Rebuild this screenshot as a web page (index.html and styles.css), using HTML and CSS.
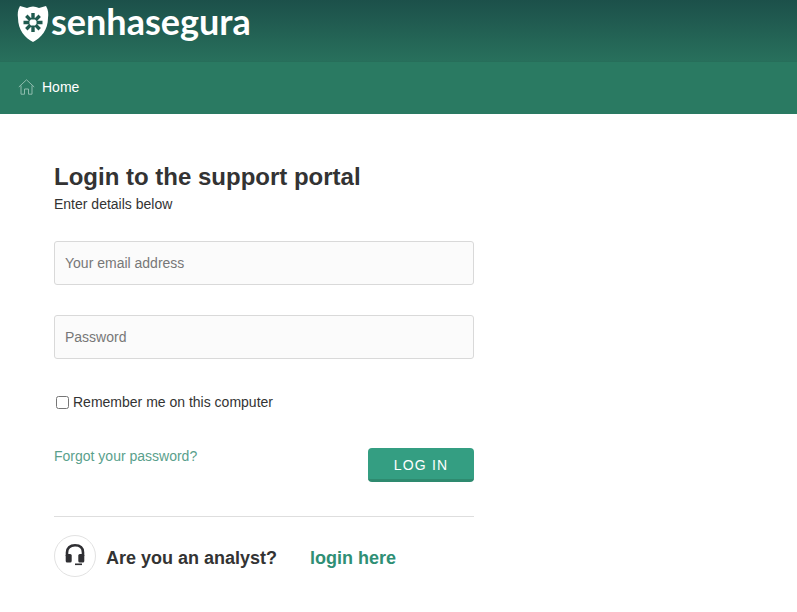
FILE: index.html
```html
<!DOCTYPE html>
<html lang="en">

<head>
    <meta charset="UTF-8">
    <meta name="viewport" content="width=device-width, initial-scale=1.0">
    <title>Login to the support portal</title>
    <link rel="stylesheet" href="styles.css">
</head>

<body>
    <header class="site-header">
        <div class="brand">
            <svg class="brand-shield" width="32" height="38" viewBox="0 0 32 38">
                <path fill="#fff" d="M3 1 L10 3 Q16 0 22 3 L29 1 Q32 6 31 13 C31 25 24 33 16 37 C8 33 1 25 1 13 Q0 6 3 1 Z" />
                <g stroke="#1f5a4f" stroke-width="3.400">
                    <path d="M16 8 V14.500 M16 20.500 V27 M6.500 17.500 H12.500 M19.500 17.500 H25.500 M9.300 10.800 L13.500 15 M18.500 20 L22.700 24.200 M22.700 10.800 L18.500 15 M13.500 20 L9.300 24.200" />
                </g>
            </svg>
            <span class="brand-name">senhasegura</span>
        </div>
        <nav class="main-nav">
            <a class="nav-link" href="#">
                <svg width="17" height="16" viewBox="0 0 17 16" fill="none" stroke="#8fbcae" stroke-width="1">
                    <path d="M0.800 8 L8.500 0.800 L16.200 8 M3 6.500 V15.200 H6.500 V10 H10.500 V15.200 H14 V6.500" />
                </svg>
                Home
            </a>
        </nav>
    </header>

    <main class="login">
        <h1 class="login-title">Login to the support portal</h1>
        <p class="login-sub">Enter details below</p>

        <form action="#" method="POST">
            <input class="field" type="text" name="email" placeholder="Your email address">
            <input class="field" type="password" name="password" placeholder="Password">

            <label class="remember">
                <input type="checkbox" name="remember">
                Remember me on this computer
            </label>

            <div class="form-actions">
                <a class="forgot" href="#">Forgot your password?</a>
                <input class="btn-login" type="submit" value="LOG IN">
            </div>
        </form>

        <div class="analyst">
            <span class="analyst-icon">
                <svg class="headset" width="20" height="22" viewBox="0 0 20 22">
                    <path fill="none" stroke="#2f2f33" stroke-width="2.600" d="M2 12 V8.500 C2 4 5 1.300 10 1.300 C15 1.300 18 4 18 8.500 V12" />
                    <rect x="0.700" y="10" width="6" height="8.500" rx="1.500" fill="#2f2f33" />
                    <rect x="13.300" y="10" width="6" height="8.500" rx="1.500" fill="#2f2f33" />
                    <rect x="10" y="19.500" width="7" height="1.600" fill="#2f2f33" />
                </svg>
            </span>
            <span class="analyst-text">Are you an analyst?</span>
            <a class="analyst-link" href="#">login here</a>
        </div>
    </main>
</body>

</html>
```

FILE: styles.css
```css
body {
    margin: 0;
    background-color: #fff;
    color: #333;
    font-family: 'Liberation Sans', Arial, sans-serif;
    font-size: 14px;
}

.site-header {
    background: #2a7a62;
}

.brand {
    display: flex;
    align-items: flex-start;
    gap: 2px;
    height: 61px;
    padding: 0 0 0 17px;
    background: linear-gradient(#1c504a, #28705c);
    border-bottom: 1px solid #276e5a;
}

.brand-shield {
    margin-top: 5px;
}

.brand-name {
    color: #fff;
    font-family: Lato, sans-serif;
    font-size: 36px;
    font-weight: 700;
    line-height: 42px;
}

.main-nav {
    display: flex;
    align-items: center;
    height: 50px;
    padding: 0 0 2px 18px;
}

.nav-link {
    display: flex;
    align-items: center;
    gap: 7px;
    color: #fff;
    text-decoration: none;
}

.login {
    width: 420px;
    padding: 49px 0 0 54px;
}

.login-title {
    margin: 0;
    font-size: 24px;
    line-height: 28px;
    font-weight: bold;
    color: #333;
}

.login-sub {
    margin: 4px 0 0;
    line-height: 18px;
    color: #333;
}

form {
    margin-top: 28px;
}

.field {
    display: block;
    width: 100%;
    height: 44px;
    margin-bottom: 30px;
    padding: 0 10px;
    border: 1px solid #d9d9d9;
    border-radius: 3px;
    box-sizing: border-box;
    background-color: #fbfbfb;
    font-family: inherit;
    font-size: 14px;
}

.field::placeholder {
    color: #777;
    opacity: 1;
}

.remember {
    display: flex;
    align-items: center;
    gap: 4px;
    height: 18px;
    margin-top: 34px;
    color: #333;
}

.remember input {
    width: 13px;
    height: 13px;
    margin: 0 0 0 2px;
}

.form-actions {
    display: flex;
    justify-content: space-between;
    align-items: flex-start;
    margin-top: 37px;
}

.forgot {
    line-height: 16px;
    color: #5a9f8c;
    text-decoration: none;
}

.btn-login {
    width: 106px;
    height: 34px;
    padding: 2px 0 0;
    border: none;
    border-bottom: 3px solid #2e8a6f;
    border-radius: 4px;
    background-color: #349e82;
    color: #fff;
    font-family: inherit;
    font-size: 14px;
    letter-spacing: 1.200px;
    cursor: pointer;
}

.analyst {
    display: flex;
    align-items: center;
    margin-top: 34px;
    padding-top: 18px;
    border-top: 1px solid #dedede;
}

.analyst-icon {
    display: flex;
    align-items: center;
    justify-content: center;
    width: 40px;
    height: 40px;
    border: 1px solid #e2e2e2;
    border-radius: 50%;
}

.headset {
    margin-bottom: 2px;
}

.analyst-text {
    margin: 4px 0 0 10px;
    font-size: 18px;
    font-weight: bold;
    color: #333;
}

.analyst-link {
    margin: 4px 0 0 33px;
    font-size: 18px;
    font-weight: bold;
    color: #2f8f75;
    text-decoration: none;
}
```
